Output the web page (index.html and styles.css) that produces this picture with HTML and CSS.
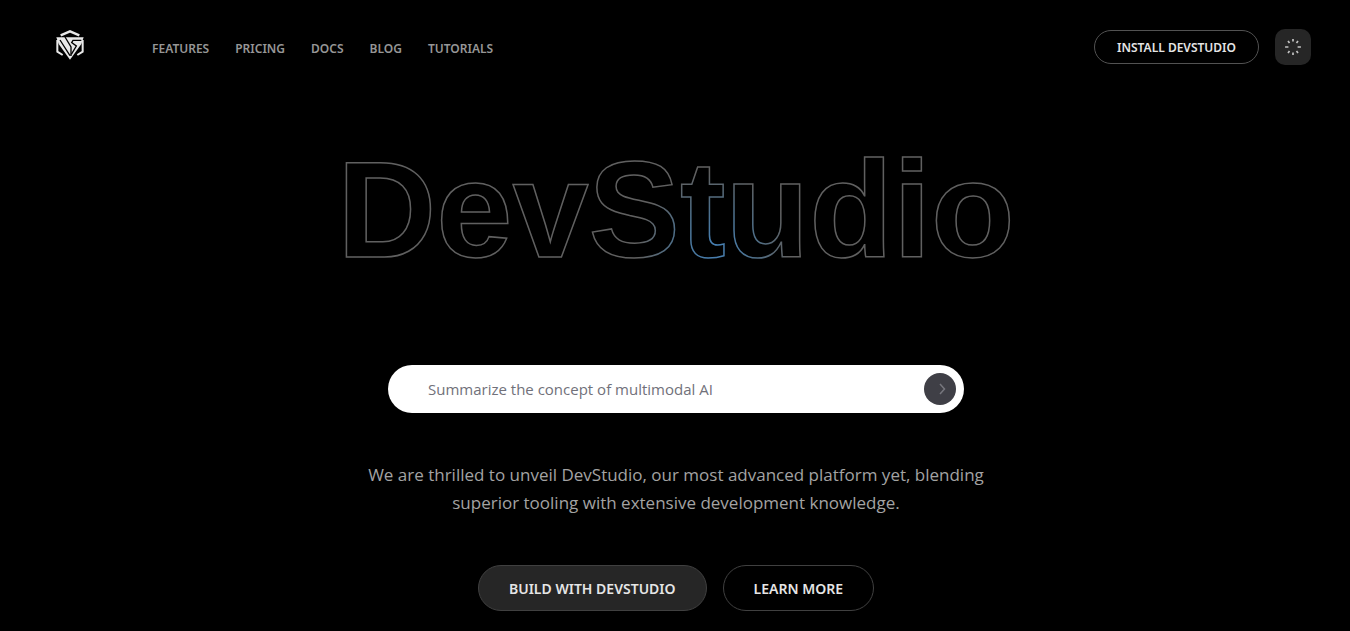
FILE: index.html
```html
<!DOCTYPE html>
<html lang="en">
<head>
<meta charset="utf-8">
<meta name="viewport" content="width=device-width, initial-scale=1">
<title>DevStudio</title>
<link rel="stylesheet" href="styles.css">
</head>
<body>
<header class="site-header">
  <a class="logo" href="#" aria-label="DevStudio home">
    <svg viewBox="0 0 84 90" width="28" height="30" fill="none" stroke="#e8e8e8" aria-hidden="true">
      <path d="M14 16 42 4 70 16" stroke-width="7"/>
      <path d="M4 30V65L20 75M80 30V65L64 75" stroke-width="6"/>
      <path d="M1 22H83L76 42 42 89 8 42Z" fill="#e8e8e8" stroke="none"/>
      <path d="M12 30 42 77M27 21 45 51V78" stroke="#000" stroke-width="4"/>
      <path d="M76 31H51L47 38 61 48 46 73" stroke="#000" stroke-width="4"/>
    </svg>
  </a>
  <nav class="main-nav" aria-label="Main">
    <a href="#">FEATURES</a>
    <a href="#">PRICING</a>
    <a href="#">DOCS</a>
    <a href="#">BLOG</a>
    <a href="#">TUTORIALS</a>
  </nav>
  <div class="header-actions">
    <button class="install" type="button">INSTALL DEVSTUDIO</button>
    <button class="loader" type="button" aria-label="Loading">
      <svg viewBox="0 0 24 24" width="20" height="20" fill="none" stroke="#c4c4c4" stroke-width="2" aria-hidden="true">
        <path d="M12 2.500v3M12 18.500v3M2.500 12h4M17.500 12h4M6 4.800l1.800 2.400M16.200 16.800 18 19.200M6 19.200l1.800-2.400M16.200 7.200 18 4.800"/>
      </svg>
    </button>
  </div>
</header>
<main class="hero">
  <h1 class="wordmark">
    <svg class="wordmark-art" viewBox="0 0 700 140" role="img" aria-label="DevStudio">
      <defs>
        <radialGradient id="glow" gradientUnits="userSpaceOnUse" cx="388" cy="110" r="76">
          <stop offset="0" stop-color="#4682b8"/>
          <stop offset="0.5" stop-color="#4d708c"/>
          <stop offset="1" stop-color="#606060"/>
        </radialGradient>
      </defs>
      <text x="350" y="119" text-anchor="middle">DevStudio</text>
    </svg>
  </h1>
  <form class="prompt">
    <input class="prompt-field" type="text" aria-label="Prompt" placeholder="Summarize the concept of multimodal AI">
    <button class="prompt-send" type="button" aria-label="Send">
      <svg viewBox="0 0 16 16" width="16" height="16" fill="none" stroke="#77777e" stroke-width="1.500" aria-hidden="true"><path d="m8 3 4.500 5L8 13"/></svg>
    </button>
  </form>
  <p class="intro">We are thrilled to unveil DevStudio, our most advanced platform yet, blending superior tooling with extensive development knowledge.</p>
  <div class="hero-actions">
    <button class="cta cta-filled" type="button">BUILD WITH DEVSTUDIO</button>
    <button class="cta" type="button">LEARN MORE</button>
  </div>
</main>
</body>
</html>
```
FILE: styles.css
```css
* { box-sizing: border-box; }
body {
  margin: 0;
  background: #000;
  color: #e5e5e5;
  font-family: "Open Sans", "Noto Sans", sans-serif;
}
button {
  font: inherit;
  color: inherit;
  padding: 0;
  cursor: pointer;
}
svg { display: block; }
.site-header {
  display: flex;
  align-items: center;
  padding: 29px 39px 0 56px;
}
.logo { margin: 0 68px 4px 0; }
.main-nav {
  display: flex;
  gap: 26px;
  padding-top: 4px;
  font-family: "Noto Sans", sans-serif;
  font-size: 12px;
  font-weight: 600;
  line-height: 16px;
}
.main-nav a {
  color: #969696;
  text-decoration: none;
}
.header-actions {
  display: flex;
  align-items: center;
  gap: 16px;
  margin-left: auto;
}
.install {
  height: 34px;
  padding: 0 22px;
  border: 1px solid #525252;
  border-radius: 17px;
  background: transparent;
  font-family: "Noto Sans", sans-serif;
  font-size: 12px;
  font-weight: 600;
}
.loader {
  display: grid;
  place-items: center;
  width: 36px;
  height: 36px;
  border: 0;
  border-radius: 10px;
  background: #262626;
}
.hero {
  display: flex;
  flex-direction: column;
  align-items: center;
  padding: 73px 24px 20px 26px;
}
.wordmark {
  width: 100%;
  max-width: 700px;
  margin: 0 0 87px;
}
.wordmark-art {
  width: 100%;
  overflow: visible;
  fill: none;
  stroke: url(#glow);
  stroke-width: 1.5px;
  font-family: "Liberation Sans", Arial, sans-serif;
  font-size: 137px;
  font-weight: 700;
}
.prompt {
  display: flex;
  align-items: center;
  width: 100%;
  max-width: 576px;
  height: 48px;
  padding-right: 8px;
  border-radius: 24px;
  background: #fff;
}
.prompt-field {
  flex: 1;
  min-width: 0;
  height: 48px;
  padding: 0 16px 0 40px;
  border: 0;
  outline: 0;
  background: transparent;
  color: #18181b;
  font: inherit;
  font-size: 15px;
}
.prompt-field::placeholder {
  color: #71717a;
  opacity: 1;
}
.prompt-send {
  display: grid;
  place-items: center;
  width: 32px;
  height: 32px;
  border: 0;
  border-radius: 50%;
  background: #3f3f46;
}
.intro {
  max-width: 640px;
  margin: 48px 0;
  color: #a3a3a3;
  font-size: 17px;
  line-height: 28px;
  text-align: center;
}
.hero-actions {
  display: flex;
  gap: 16px;
}
.cta {
  height: 46px;
  padding: 0 30px;
  border: 1px solid #404040;
  border-radius: 23px;
  background: transparent;
  font-family: "Noto Sans", sans-serif;
  font-size: 14px;
  font-weight: 600;
}
.cta-filled { background: #262626; }
```
